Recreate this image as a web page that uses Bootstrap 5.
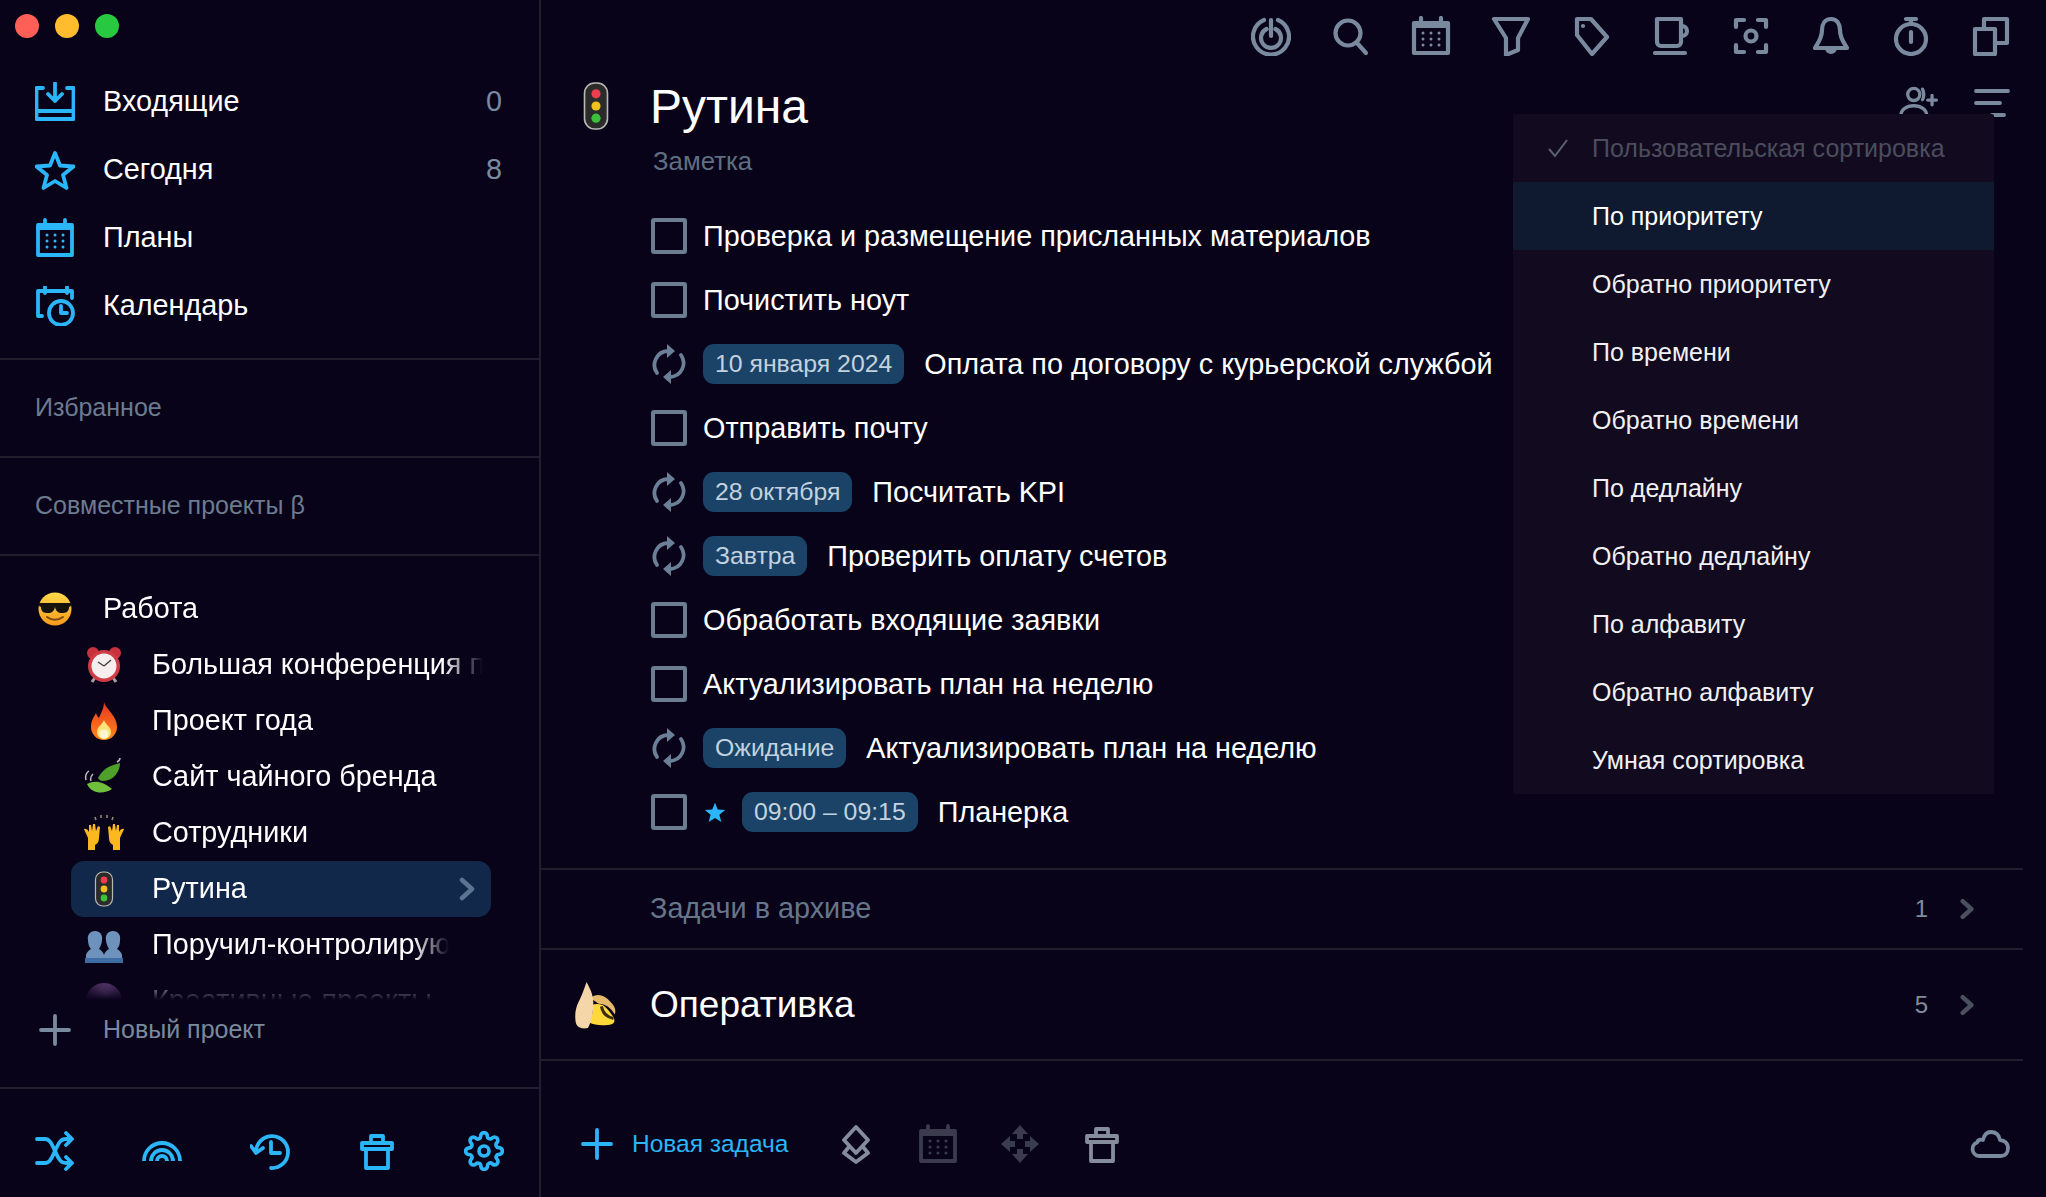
<!DOCTYPE html>
<html lang="ru">
<head>
<meta charset="UTF-8">
<title>Рутина</title>
<link href="https://cdn.jsdelivr.net/npm/bootstrap@5.3.0/dist/css/bootstrap.min.css" rel="stylesheet">
<style>
    :root { --bg: #09031a; --line: #211f2e; --blue: #2ab6f8; --gray: #7a8a9e; }
    html, body { height: 100%; }
    body { background: var(--bg); color: #fff; font-family: "Liberation Sans", Arial, sans-serif; font-size: 28.8px; overflow: hidden; }
    .ico { width: 40px; height: 40px; flex: none; fill: none; stroke: currentColor; stroke-width: 3.8; stroke-linejoin: round; stroke-linecap: round; }
    .tblue { color: var(--blue); }
    .tgray { color: var(--gray); }
    .tdim { color: #3a3b4c; }
    .tsoft { color: #858c9b; }

    .side { width: 541px; flex: none; border-right: 2px solid var(--line); height: 100vh; }
    .winbar { height: 68px; padding: 14px 0 0 15px; gap: 16px; flex: none; }
    .wdot { width: 24px; height: 24px; border-radius: 50%; }
    .side-nav { padding-bottom: 18px; border-bottom: 2px solid var(--line); flex: none; }
    .side-row { height: 68px; padding: 0 37px 0 35px; gap: 28px; color: #fff; }
    .side-cnt { color: var(--gray); }
    .side-sec { height: 98px; padding-left: 35px; font-size: 25px; color: #6c7b8f; border-bottom: 2px solid var(--line); flex: none; }
    .proj-list { overflow: hidden; padding-top: 25px; -webkit-mask-image: linear-gradient(to bottom, #000 94%, transparent 100%); mask-image: linear-gradient(to bottom, #000 94%, transparent 100%); }
    .proj-top { height: 56px; padding-left: 35px; gap: 28px; }
    .proj-row { height: 56px; margin-left: 71px; width: 420px; padding-left: 13px; gap: 28px; border-radius: 13px; position: relative; }
    .proj-row.on { background: #12284a; }
    .emo { width: 40px; height: 40px; flex: none; }
    .emo-lg { width: 54px; height: 54px; margin: 0 -7px; flex: none; }
    .pname { white-space: nowrap; }
    .pfade { overflow: hidden; max-width: 331px; -webkit-mask-image: linear-gradient(to right, #000 88%, transparent); mask-image: linear-gradient(to right, #000 88%, transparent); }
    .pfade.cut { max-width: 297px; }
    .chev-side { width: 16px; height: 24px; stroke-width: 4.5; color: #5b7490; margin-left: auto; margin-right: 16px; }
    .proj-add { height: 60px; padding-left: 35px; gap: 28px; font-size: 25px; margin-bottom: 27px; color: var(--gray); flex: none; }
    .side-foot { height: 110px; flex: none; padding: 16px 35px 0; border-top: 2px solid var(--line); }

    .workarea { min-width: 0; height: 100vh; }
    .topbar { height: 72px; padding-right: 35px; gap: 40px; flex: none; }
    .topbar .ico { stroke-width: 4.2; }
    .head-row { height: 68px; padding: 0 34px 0 35px; flex: none; }
    .page-title { font-size: 48px; margin: 0 0 0 34px; padding-top: 2px; font-weight: 400; }
    .head-tools { margin-left: auto; gap: 33px; margin-bottom: 4px; }
    .note-line { height: 40px; padding: 2px 0 0 112px; font-size: 25.800px; color: #5f6f83; flex: none; }
    .task-list { padding: 24px 0 24px 110px; margin: 0; list-style: none; flex: none; }
    .task-row { height: 64px; gap: 16px; white-space: nowrap; }
    .task-row > span:last-child { padding-top: 2px; }
    .cbx { width: 36px; height: 36px; flex: none; border: 4px solid #6c7d92; border-radius: 3px; }
    .cyc { width: 36px; height: 40px; stroke: #6c7f96; }
    .cyc-tip { fill: #6c7f96; stroke: none; }
    .stari { width: 22px; height: 22px; fill: var(--blue); stroke: none; flex: none; margin-left: 1px; margin-right: 0; }
    .tagchip { height: 40px; padding: 0 12px; border-radius: 11px; background: #1a4367; color: #c3d2df; font-size: 24.8px; line-height: 40px; flex: none; }
    .chip-gap { margin-right: 4px; }
    .fold-row { margin-right: 23px; padding: 0 49px 0 109px; border-top: 2px solid var(--line); flex: none; }
    .fold-arch { height: 80px; color: #66768a; }
    .fold-op { height: 113px; padding-left: 35px; border-bottom: 2px solid var(--line); }
    .op-name { font-size: 37px; margin-left: 34px; }
    .fold-cnt { margin-left: auto; font-size: 24px; color: #818b9a; }
    .chev-small { width: 14px; height: 22px; stroke-width: 5; color: #4b505e; margin-left: 32px; }
    .foot-bar { flex: 1 1 auto; padding: 30px 36px 0 36px; gap: 42px; }
    .newtask { gap: 15px; font-size: 24.5px; margin-right: 6px; }

    .sort-menu { position: absolute; top: 114px; right: 52px; left: auto; width: 481px; padding: 0; margin: 0; border: 0; border-radius: 2px; background: #120b20; font-size: 25px; z-index: 5; }
    .sort-menu .dropdown-item { height: 68px; padding: 2px 0 0 79px; color: #f0f1f4; display: flex; align-items: center; position: relative; }
    .sort-menu .dropdown-item.picked { color: #4b4d5d; }
    .sort-menu .dropdown-item.hot { background: #0f1a30; color: #fff; }
    .tick { position: absolute; left: 34px; top: 24px; width: 22px; height: 20px; stroke: #5c6272; stroke-width: 2; fill: none; }
</style>
</head>
<body>

<svg width="0" height="0" class="position-absolute">
    <defs>
        <linearGradient id="gf" x1="0" y1="0" x2="0" y2="1"><stop offset="0" stop-color="#e8331f"/><stop offset="1" stop-color="#ff8a1c"/></linearGradient>
        <linearGradient id="gs" x1="0" y1="0" x2="0" y2="1"><stop offset="0" stop-color="#ffd94a"/><stop offset="1" stop-color="#f59a1c"/></linearGradient>
        <radialGradient id="gp" cx=".55" cy=".3" r=".7"><stop offset="0" stop-color="#a774c4"/><stop offset="1" stop-color="#31103f"/></radialGradient>
    </defs>
    <symbol id="i-inbox" viewBox="0 0 40 40"><path d="M8 6H1.500v31h37V6H32M1.500 29h37M20 1v18M13 12l7 7 7-7"/></symbol>
    <symbol id="i-star" viewBox="0 0 40 40"><path d="M20 3l5 12.500 13.500 1-10.500 8.500 3.500 13L20 31l-11.500 7 3.500-13L1.500 16.500l13.500-1z"/></symbol>
    <symbol id="i-cal" viewBox="0 0 40 40"><rect x="3" y="7" width="34" height="30"/><path d="M10 2v5M30 2v5M3 10h34" /><path stroke-width="3" d="M12 17h.01M20 17h.01M28 17h.01M12 23h.01M20 23h.01M28 23h.01M12 29h.01M20 29h.01M28 29h.01"/></symbol>
    <symbol id="i-calclock" viewBox="0 0 40 40"><path d="M10 1v6M32 1v6M3 30V5h34v7M3 30h4"/><circle cx="26" cy="27" r="12"/><path d="M26 20v7h6"/></symbol>
    <symbol id="i-target" viewBox="0 0 40 40"><path d="M13 4a18 18 0 1 0 14 0M15.500 13a10 10 0 1 0 9 0M20 4v16"/></symbol>
    <symbol id="i-search" viewBox="0 0 40 40"><circle cx="17" cy="17" r="12.500"/><path d="M26 27l9 10"/></symbol>
    <symbol id="i-funnel" viewBox="0 0 40 40"><path d="M3 3h34L27 22v12l-12 5V22z"/></symbol>
    <symbol id="i-tag" viewBox="0 0 40 40"><path d="M6 3h14l16 18-15 17L6 19z"/><path d="M12 10h.01"/></symbol>
    <symbol id="i-cup" viewBox="0 0 40 40"><path d="M6 3h24v23a4 4 0 0 1-4 4H10a4 4 0 0 1-4-4zM30 10h1a5 5 0 0 1 0 10h-1M4 37h30"/></symbol>
    <symbol id="i-focus" viewBox="0 0 40 40"><path d="M5 11V4h8M27 4h8v7M35 29v7h-8M13 36H5v-7"/><circle cx="20" cy="20" r="5.500"/></symbol>
    <symbol id="i-bell" viewBox="0 0 40 40"><path d="M20 3c-6 0-9 5-9 11 0 9-5 14-7 18h32c-2-4-7-9-7-18 0-6-3-11-9-11zM16 32a4 4 0 0 0 8 0"/></symbol>
    <symbol id="i-watch" viewBox="0 0 40 40"><circle cx="20" cy="23" r="15"/><path d="M15 3h10M20 3v5M20 16v10"/></symbol>
    <symbol id="i-copy" viewBox="0 0 40 40"><rect x="4" y="13" width="20" height="25"/><path d="M13 13V3h23v24H24"/></symbol>
    <symbol id="i-shuffle" viewBox="0 0 40 40"><path d="M2 8h8c4 0 6 3 10 12s6 12 11 12h6M2 32h8c4 0 6-3 10-12s6-12 11-12h6M31 2l6 6-6 6M31 26l6 6-6 6"/></symbol>
    <symbol id="i-rainbow" viewBox="0 0 40 40"><path stroke-linecap="butt" d="M2 30a18 18 0 0 1 36 0M9 30a11 11 0 0 1 22 0M15 30a5 5 0 0 1 10 0"/></symbol>
    <symbol id="i-hist" viewBox="0 0 40 40"><path d="M6 21a16 16 0 1 1 15 16M1 15l5 7 7-5M21 11v11h9"/></symbol>
    <symbol id="i-trash" viewBox="0 0 40 40"><path d="M5 12h30v6H5zM9 18v19h22V18M14 12V5h12v7"/></symbol>
    <symbol id="i-gear" viewBox="0 0 40 40"><g transform="scale(1.667)" stroke-width="2.200"><circle cx="12" cy="12" r="3"/><path d="M19.400 15a1.650 1.650 0 0 0 .33 1.820l.06.06a2 2 0 0 1 0 2.830 2 2 0 0 1-2.830 0l-.06-.06a1.650 1.650 0 0 0-1.820-.33 1.650 1.650 0 0 0-1 1.510V21a2 2 0 0 1-2 2 2 2 0 0 1-2-2v-.09A1.650 1.650 0 0 0 9 19.400a1.650 1.650 0 0 0-1.820.33l-.06.06a2 2 0 0 1-2.830 0 2 2 0 0 1 0-2.830l.06-.06a1.650 1.650 0 0 0 .33-1.820 1.650 1.650 0 0 0-1.510-1H3a2 2 0 0 1-2-2 2 2 0 0 1 2-2h.09A1.650 1.650 0 0 0 4.600 9a1.650 1.650 0 0 0-.33-1.820l-.06-.06a2 2 0 0 1 0-2.830 2 2 0 0 1 2.830 0l.06.06a1.650 1.650 0 0 0 1.820.33H9a1.650 1.650 0 0 0 1-1.510V3a2 2 0 0 1 2-2 2 2 0 0 1 2 2v.09a1.650 1.650 0 0 0 1 1.510 1.650 1.650 0 0 0 1.820-.33l.06-.06a2 2 0 0 1 2.830 0 2 2 0 0 1 0 2.830l-.06.06a1.650 1.650 0 0 0-.33 1.820V9a1.650 1.650 0 0 0 1.510 1H21a2 2 0 0 1 2 2 2 2 0 0 1-2 2h-.09a1.650 1.650 0 0 0-1.510 1z"/></g></symbol>
    <symbol id="i-plus" viewBox="0 0 40 40"><path d="M20 6v28M6 20h28"/></symbol>
    <symbol id="i-chev" viewBox="0 0 16 24"><path d="M3 3l10 9-10 9"/></symbol>
    <symbol id="i-repeat" viewBox="0 0 36 40"><path d="M6 29A14 14 0 0 1 17 7M30 11a14 14 0 0 1-11 22"/><path class="cyc-tip" d="M16 0l8 7-8 7zM20 26l-8 7 8 7z"/></symbol>
    <symbol id="i-person" viewBox="0 0 46 40"><circle cx="17" cy="9" r="7"/><path d="M27 3c2 3 2 9 0 12M2 34c0-8 7-12 15-12s15 4 15 12M38 10v11M33 15.500h10"/></symbol>
    <symbol id="i-sort" viewBox="0 0 40 40"><path d="M4 7h32M4 19h24M20 31h12"/></symbol>
    <symbol id="i-diam" viewBox="0 0 40 40"><path d="M20 3l12 13-12 13L8 16zM12 24l-4 5 12 9 12-9-4-5"/></symbol>
    <symbol id="i-move" viewBox="0 0 40 40"><path stroke="none" fill="currentColor" d="M20 1l8 9h-5v5h-6v-5h-5zM20 39l-8-9h5v-5h6v5h5zM1 20l9-8v5h5v6h-5v5zM39 20l-9 8v-5h-5v-6h5v-5z"/></symbol>
    <symbol id="i-cloud" viewBox="0 0 40 28"><path d="M9 26a7 7 0 0 1-2-13.500C8 10 10 9 13 10c1-5 4-8 8-8 5 0 8 3 9 8 4 0 8 3 8 8s-3 8-7 8z"/></symbol>
    <symbol id="i-tick" viewBox="0 0 22 20"><path d="M2 11l6 7L20 2"/></symbol>

    <symbol id="e-cool" viewBox="0 0 40 40"><circle cx="20" cy="20" r="16.500" fill="url(#gs)"/><path fill="#16130f" d="M4 14h32v3l-2 1c0 5-3 6-7 6-4 0-6-2-7-6-1 4-3 6-7 6-4 0-7-1-7-6l-2-1z"/><path d="M12 28c5 3.500 11 3.500 16 0" fill="none" stroke="#7b4a10" stroke-width="2" stroke-linecap="round"/></symbol>
    <symbol id="e-clock" viewBox="0 0 40 40"><circle cx="9" cy="8" r="6" fill="#c8323d"/><circle cx="31" cy="8" r="6" fill="#c8323d"/><path d="M8 37l4-6M32 37l-4-6" stroke="#a7a0a0" stroke-width="3"/><circle cx="20" cy="21" r="16" fill="#cf3c46"/><circle cx="20" cy="21" r="12.500" fill="#f6eeee"/><path d="M20 21l-6-4M20 21l7-6" stroke="#444" stroke-width="1.500" fill="none"/></symbol>
    <symbol id="e-fire" viewBox="0 0 40 40"><path fill="url(#gf)" d="M20 1c2 8 13 13 13 25a13 13 0 0 1-26 0c0-7 3-10 5-14 1 3 2 4 3 5 2-5 5-10 5-16z"/><path fill="#ffe27a" d="M20 19c1 4 7 7 7 12a7 7 0 0 1-14 0c0-5 5-7 7-12z"/><circle cx="20" cy="33" r="4.500" fill="#fff6cf"/></symbol>
    <symbol id="e-leaf" viewBox="0 0 40 40"><path fill="#4fa02b" d="M14 21C20 9 30 8 36 6c0 8-6 18-17 18-2 0-4-1-5-3z"/><path fill="#6fbf3c" d="M3 27c8-4 15-3 25 5-7 5-20 6-25-5z"/><path d="M2 23c-1-4 0-7 3-9M7 24c-1-3 0-5 2-7M33 5c2-1 3-2 3-4" stroke="#bbb" stroke-width="1.500" fill="none"/></symbol>
    <symbol id="e-hands" viewBox="0 0 40 40"><path fill="#fbb81f" d="M4 37V25c-1-3-3-6-4-9 2-1 4 1 5 3l0-7h2l1 6 1-7h2l1 7 2-5 2 1-1 11c0 4-2 6-4 7v5zM36 37V25c1-3 3-6 4-9-2-1-4 1-5 3l0-7h-2l-1 6-1-7h-2l-1 7-2-5-2 1 1 11c0 4 2 6 4 7v5z"/><path d="M11 4l1 3M17 2v3M23 2v3M29 4l-1 3" stroke="#9a8f78" stroke-width="1.500" fill="none"/></symbol>
    <symbol id="e-light" viewBox="0 0 40 40"><rect x="11.500" y="3" width="17" height="34" rx="7.500" fill="#2b2b2b" stroke="#b9b9b3" stroke-width="1.200"/><circle cx="20" cy="11" r="3.400" fill="#ef3d4e"/><circle cx="20" cy="20" r="3.400" fill="#f2c01c"/><circle cx="20" cy="29" r="3.400" fill="#3cc13b"/></symbol>
    <symbol id="e-busts" viewBox="0 0 40 40"><path fill="#6d93bd" d="M11 6c5 0 8 4 7 9 0 4-2 7-3 9 3 2 4 3 5 6v6H2v-6c1-3 2-4 5-6-2-2-3-5-3-9-1-5 2-9 7-9zM29 6c5 0 8 4 7 9 0 4-1 7-3 9 3 2 4 3 5 6v6H20v-6c1-3 2-4 5-6-1-2-3-5-3-9-1-5 2-9 7-9z"/><path fill="#3e6da3" d="M1 33h38v5H1z"/></symbol>
    <symbol id="e-ball" viewBox="0 0 40 40"><circle cx="20" cy="20" r="18" fill="url(#gp)"/></symbol>
    <symbol id="e-banana" viewBox="0 0 40 40"><path fill="#e7b96a" d="M16 15c4-4 10-3 15 3 3 3 4 6 3 9-3-5-7-8-12-8z"/><path fill="#ffd93b" d="M17 20c2-1 5-1 8 0 3 2 6 6 8 9 1 2 1 4-1 5-6 2-13 1-17-1 2-4 3-8 2-13z"/><path fill="#f4d6a8" d="M13 3c2 4 5 9 5 15 0 7-1 14-4 19-4 1-8 0-9-4-1-6 0-11 2-15 2-4 4-9 6-15z"/><path d="M24 21c1 5 4 8 9 9" stroke="#3b2d0c" stroke-width="2.200" fill="none"/></symbol>
</svg>

<div class="d-flex">
    <aside class="side d-flex flex-column">
        <div class="winbar d-flex align-items-start">
            <span class="wdot" style="background:#fe5f57"></span>
            <span class="wdot" style="background:#febc2e"></span>
            <span class="wdot" style="background:#28c840"></span>
        </div>
        <nav class="side-nav">
            <div class="side-row d-flex align-items-center"><svg class="ico tblue"><use href="#i-inbox"/></svg><span>Входящие</span><span class="side-cnt ms-auto">0</span></div>
            <div class="side-row d-flex align-items-center"><svg class="ico tblue"><use href="#i-star"/></svg><span>Сегодня</span><span class="side-cnt ms-auto">8</span></div>
            <div class="side-row d-flex align-items-center"><svg class="ico tblue"><use href="#i-cal"/></svg><span>Планы</span></div>
            <div class="side-row d-flex align-items-center"><svg class="ico tblue"><use href="#i-calclock"/></svg><span>Календарь</span></div>
        </nav>
        <div class="side-sec d-flex align-items-center">Избранное</div>
        <div class="side-sec d-flex align-items-center">Совместные проекты β</div>
        <div class="proj-list flex-grow-1">
            <div class="proj-top d-flex align-items-center"><svg class="emo"><use href="#e-cool"/></svg><span>Работа</span></div>
            <div class="proj-row d-flex align-items-center"><svg class="emo"><use href="#e-clock"/></svg><span class="pname pfade">Большая конференция по продукту</span></div>
            <div class="proj-row d-flex align-items-center"><svg class="emo"><use href="#e-fire"/></svg><span class="pname">Проект года</span></div>
            <div class="proj-row d-flex align-items-center"><svg class="emo"><use href="#e-leaf"/></svg><span class="pname">Сайт чайного бренда</span></div>
            <div class="proj-row d-flex align-items-center"><svg class="emo"><use href="#e-hands"/></svg><span class="pname">Сотрудники</span></div>
            <div class="proj-row on d-flex align-items-center"><svg class="emo"><use href="#e-light"/></svg><span>Рутина</span><svg class="ico chev-side"><use href="#i-chev"/></svg></div>
            <div class="proj-row d-flex align-items-center"><svg class="emo"><use href="#e-busts"/></svg><span class="pname pfade cut">Поручил-контролирующий</span></div>
            <div class="proj-row d-flex align-items-center"><svg class="emo"><use href="#e-ball"/></svg><span class="pname">Креативные проекты</span></div>
        </div>
        <div class="proj-add d-flex align-items-center"><svg class="ico"><use href="#i-plus"/></svg><span>Новый проект</span></div>
        <div class="side-foot d-flex align-items-center justify-content-between tblue">
            <svg class="ico"><use href="#i-shuffle"/></svg>
            <svg class="ico"><use href="#i-rainbow"/></svg>
            <svg class="ico"><use href="#i-hist"/></svg>
            <svg class="ico"><use href="#i-trash"/></svg>
            <svg class="ico"><use href="#i-gear"/></svg>
        </div>
    </aside>

    <main class="workarea flex-grow-1 d-flex flex-column position-relative">
        <div class="topbar d-flex align-items-center justify-content-end tgray">
            <svg class="ico"><use href="#i-target"/></svg>
            <svg class="ico"><use href="#i-search"/></svg>
            <svg class="ico"><use href="#i-cal"/></svg>
            <svg class="ico"><use href="#i-funnel"/></svg>
            <svg class="ico"><use href="#i-tag"/></svg>
            <svg class="ico"><use href="#i-cup"/></svg>
            <svg class="ico"><use href="#i-focus"/></svg>
            <svg class="ico"><use href="#i-bell"/></svg>
            <svg class="ico"><use href="#i-watch"/></svg>
            <svg class="ico"><use href="#i-copy"/></svg>
        </div>

        <div class="head-row d-flex align-items-center">
            <svg class="emo-lg"><use href="#e-light"/></svg>
            <h1 class="page-title">Рутина</h1>
            <div class="head-tools d-flex align-items-center tgray">
                <svg class="ico"><use href="#i-person"/></svg>
                <svg class="ico"><use href="#i-sort"/></svg>
            </div>
        </div>
        <div class="note-line d-flex align-items-center">Заметка</div>

        <ul class="task-list">
            <li class="task-row d-flex align-items-center"><span class="cbx"></span><span>Проверка и размещение присланных материалов</span></li>
            <li class="task-row d-flex align-items-center"><span class="cbx"></span><span>Почистить ноут</span></li>
            <li class="task-row d-flex align-items-center"><svg class="ico cyc"><use href="#i-repeat"/></svg><span class="tagchip chip-gap">10 января 2024</span><span>Оплата по договору с курьерской службой</span></li>
            <li class="task-row d-flex align-items-center"><span class="cbx"></span><span>Отправить почту</span></li>
            <li class="task-row d-flex align-items-center"><svg class="ico cyc"><use href="#i-repeat"/></svg><span class="tagchip chip-gap">28 октября</span><span>Посчитать KPI</span></li>
            <li class="task-row d-flex align-items-center"><svg class="ico cyc"><use href="#i-repeat"/></svg><span class="tagchip chip-gap">Завтра</span><span>Проверить оплату счетов</span></li>
            <li class="task-row d-flex align-items-center"><span class="cbx"></span><span>Обработать входящие заявки</span></li>
            <li class="task-row d-flex align-items-center"><span class="cbx"></span><span>Актуализировать план на неделю</span></li>
            <li class="task-row d-flex align-items-center"><svg class="ico cyc"><use href="#i-repeat"/></svg><span class="tagchip chip-gap">Ожидание</span><span>Актуализировать план на неделю</span></li>
            <li class="task-row d-flex align-items-center"><span class="cbx"></span><svg class="stari"><use href="#i-star"/></svg><span class="tagchip chip-gap">09:00 – 09:15</span><span>Планерка</span></li>
        </ul>

        <div class="fold-row fold-arch d-flex align-items-center">
            <span>Задачи в архиве</span>
            <span class="fold-cnt">1</span>
            <svg class="ico chev-small"><use href="#i-chev"/></svg>
        </div>
        <div class="fold-row fold-op d-flex align-items-center">
            <svg class="emo-lg"><use href="#e-banana"/></svg>
            <span class="op-name">Оперативка</span>
            <span class="fold-cnt">5</span>
            <svg class="ico chev-small"><use href="#i-chev"/></svg>
        </div>

        <div class="foot-bar d-flex align-items-center">
            <div class="newtask d-flex align-items-center tblue"><svg class="ico"><use href="#i-plus"/></svg><span>Новая задача</span></div>
            <svg class="ico tsoft"><use href="#i-diam"/></svg>
            <svg class="ico tdim"><use href="#i-cal"/></svg>
            <svg class="ico tdim"><use href="#i-move"/></svg>
            <svg class="ico tsoft"><use href="#i-trash"/></svg>
            <svg class="ico tgray ms-auto"><use href="#i-cloud"/></svg>
        </div>

        <div class="dropdown-menu show sort-menu">
            <a class="dropdown-item picked" href="#"><svg class="tick"><use href="#i-tick"/></svg>Пользовательская сортировка</a>
            <a class="dropdown-item hot" href="#">По приоритету</a>
            <a class="dropdown-item" href="#">Обратно приоритету</a>
            <a class="dropdown-item" href="#">По времени</a>
            <a class="dropdown-item" href="#">Обратно времени</a>
            <a class="dropdown-item" href="#">По дедлайну</a>
            <a class="dropdown-item" href="#">Обратно дедлайну</a>
            <a class="dropdown-item" href="#">По алфавиту</a>
            <a class="dropdown-item" href="#">Обратно алфавиту</a>
            <a class="dropdown-item" href="#">Умная сортировка</a>
        </div>
    </main>
</div>

<script src="https://cdn.jsdelivr.net/npm/bootstrap@5.3.0/dist/js/bootstrap.bundle.min.js"></script>
</body>
</html>
